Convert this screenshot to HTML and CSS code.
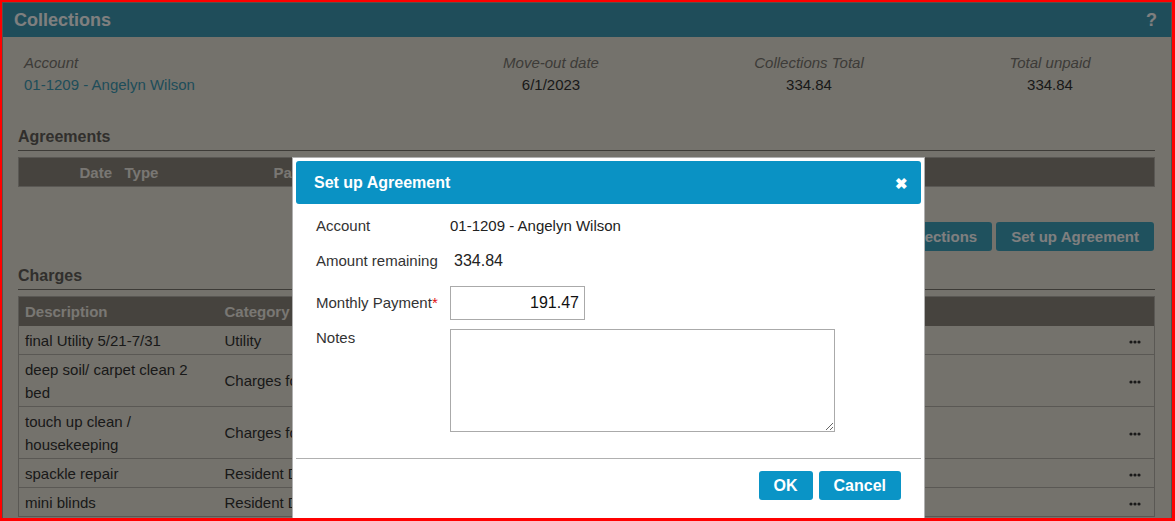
FILE: index.html
```html
<!DOCTYPE html>
<html>
<head>
<meta charset="utf-8">
<title>Collections</title>
<link rel="stylesheet" href="styles.css">
</head>
<body>
<div class="app">
  <div class="titlebar">
    <span class="title">Collections</span>
    <span class="help">?</span>
  </div>
  <div class="content">
    <div class="summary">
      <div class="cell first">
        <div class="lbl">Account</div>
        <a class="link">01-1209 - Angelyn Wilson</a>
      </div>
      <div class="cell">
        <div class="lbl">Move-out date</div>
        <div class="val">6/1/2023</div>
      </div>
      <div class="cell">
        <div class="lbl">Collections Total</div>
        <div class="val">334.84</div>
      </div>
      <div class="cell">
        <div class="lbl">Total unpaid</div>
        <div class="val">334.84</div>
      </div>
    </div>

    <h2 class="section">Agreements</h2>
    <table class="grid">
      <thead>
        <tr>
          <th class="a-sel"></th>
          <th class="a-date">Date</th>
          <th class="a-type">Type</th>
          <th class="a-pay">Payment</th>
          <th></th>
        </tr>
      </thead>
    </table>

    <div class="actions">
      <button class="btn">Remove from Collections</button>
      <button class="btn">Set up Agreement</button>
    </div>

    <h2 class="section">Charges</h2>
    <table class="grid charges">
      <thead>
        <tr>
          <th class="c-desc">Description</th>
          <th class="c-cat">Category</th>
          <th></th>
          <th class="c-more"></th>
        </tr>
      </thead>
      <tbody>
        <tr><td>final Utility 5/21-7/31</td><td>Utility</td><td></td><td class="c-more"><svg class="dots" viewBox="0 0 12 4" width="12" height="4"><circle cx="2" cy="2" r="1.6"/><circle cx="6" cy="2" r="1.6"/><circle cx="10" cy="2" r="1.6"/></svg></td></tr>
        <tr><td>deep soil/ carpet clean 2 bed</td><td>Charges for cleaning</td><td></td><td class="c-more"><svg class="dots" viewBox="0 0 12 4" width="12" height="4"><circle cx="2" cy="2" r="1.6"/><circle cx="6" cy="2" r="1.6"/><circle cx="10" cy="2" r="1.6"/></svg></td></tr>
        <tr><td>touch up clean / housekeeping</td><td>Charges for cleaning</td><td></td><td class="c-more"><svg class="dots" viewBox="0 0 12 4" width="12" height="4"><circle cx="2" cy="2" r="1.6"/><circle cx="6" cy="2" r="1.6"/><circle cx="10" cy="2" r="1.6"/></svg></td></tr>
        <tr><td>spackle repair</td><td>Resident Damages</td><td></td><td class="c-more"><svg class="dots" viewBox="0 0 12 4" width="12" height="4"><circle cx="2" cy="2" r="1.6"/><circle cx="6" cy="2" r="1.6"/><circle cx="10" cy="2" r="1.6"/></svg></td></tr>
        <tr><td>mini blinds</td><td>Resident Damages</td><td></td><td class="c-more"><svg class="dots" viewBox="0 0 12 4" width="12" height="4"><circle cx="2" cy="2" r="1.6"/><circle cx="6" cy="2" r="1.6"/><circle cx="10" cy="2" r="1.6"/></svg></td></tr>
      </tbody>
    </table>
  </div>
</div>

<div class="overlay"></div>

<div class="modal">
  <div class="modal-head">
    <span class="modal-title">Set up Agreement</span>
    <span class="modal-close">&#10006;</span>
  </div>
  <div class="modal-body">
    <div class="m-lbl r1">Account</div>
    <div class="m-val r1">01-1209 - Angelyn Wilson</div>
    <div class="m-lbl r2">Amount remaining</div>
    <div class="m-val r2 amount">334.84</div>
    <div class="m-lbl r3">Monthly Payment<span class="req">*</span></div>
    <div class="m-val r3"><input class="m-input" type="text" value="191.47"></div>
    <div class="m-lbl r4">Notes</div>
    <div class="m-val r4"><textarea class="m-notes"></textarea></div>
  </div>
  <div class="modal-foot">
    <button class="m-btn">OK</button>
    <button class="m-btn">Cancel</button>
  </div>
</div>

<div class="frame"></div>
</body>
</html>
```
FILE: styles.css
```css
* { box-sizing: border-box; }

html, body {
  margin: 0;
  padding: 0;
  height: 100%;
  overflow: hidden;
}

body {
  font-family: "Liberation Sans", Arial, sans-serif;
  font-size: 15px;
  color: #333;
  background: #e8e4d8;
}

.app {
  margin: 2px 3px 0 2px;
  height: calc(100% - 2px);
  border: 1px solid #a8a59c;
  border-bottom: none;
  background: #e8e4d8;
}

.titlebar {
  height: 34px;
  background: #3e9bb4;
  color: #fff;
  display: flex;
  align-items: center;
  justify-content: space-between;
  padding: 0 14px 0 11px;
  font-weight: bold;
  font-size: 18px;
}

.content {
  padding: 0 15px 0 15px;
  margin-right: 1px;
}

.summary {
  display: grid;
  grid-template-columns: 1fr 244px 272px 210px;
  padding: 15px 0 0 6px;
  line-height: 22px;
}

.cell { text-align: center; }
.cell.first { text-align: left; }

.lbl {
  font-style: italic;
  color: #7a7770;
}

.val { color: #333; }

.link {
  color: #3e9bb4;
  text-decoration: none;
}

.section {
  margin: 31px 0 6px 0;
  font-size: 16px;
  line-height: 20px;
  font-weight: bold;
  color: #625f5a;
  padding-bottom: 3px;
  border-bottom: 1px solid #7a766e;
}

.grid {
  width: 100%;
  table-layout: fixed;
  border-collapse: collapse;
  border: 1px solid #b4b0a8;
}

.grid th {
  background: #8c867c;
  color: #f2eee6;
  font-weight: bold;
  text-align: left;
  height: 29px;
  padding: 0 6px;
  white-space: nowrap;
  overflow: hidden;
}

.a-sel { width: 55px; }
.a-date { width: 45px; }
.a-type { width: 149px; }
.a-pay { width: 120px; }

.actions {
  display: flex;
  justify-content: flex-end;
  gap: 4px;
  padding: 35px 1px 0 0;
}

.btn {
  font-family: inherit;
  font-size: 15px;
  font-weight: bold;
  color: #fff;
  background: #3fa2bd;
  border: none;
  border-radius: 3px;
  height: 29px;
  padding: 0 15px;
}

.actions + .section { margin-top: 15px; }

.charges td {
  padding: 3px 6px 2px 6px;
  line-height: 23px;
  border-bottom: 1px solid #b4b0a8;
  vertical-align: middle;
}

.c-desc { width: 200px; }
.c-cat { width: 260px; }
.c-more { width: 40px; text-align: right; }
.charges td.c-more { padding-right: 13px; }

.dots { fill: #333; display: inline-block; vertical-align: middle; }

.overlay {
  position: fixed;
  inset: 0;
  background: rgba(0, 0, 0, 0.5);
}

.modal {
  position: fixed;
  left: 292px;
  top: 157px;
  width: 633px;
  height: 370px;
  background: #fff;
  border: 1px solid #b0b0b0;
  padding: 3px;
  color: #333;
}

.modal-head {
  height: 43px;
  background: #0a92c4;
  border-radius: 3px;
  display: flex;
  align-items: center;
  justify-content: space-between;
  padding: 1px 13px 0 18px;
  color: #fff;
  font-weight: bold;
  font-size: 16px;
}

.modal-close {
  font-size: 15px;
  line-height: 1;
}

.modal-body {
  display: grid;
  grid-template-columns: 134px 1fr;
  padding: 11px 0 0 20px;
  line-height: 22px;
  row-gap: 0;
}

.m-lbl { color: #333; }
.m-val { color: #222; }

.r1 { margin-bottom: 13px; }
.r2 { margin-bottom: 14px; }
.r3 { margin-bottom: 9px; }
.m-lbl.r3 { align-self: center; }
.m-lbl.r4 { margin-top: -2px; }

.amount {
  font-size: 16px;
  padding-left: 4px;
}

.req { color: #e01010; }

.m-input {
  width: 135px;
  height: 34px;
  border: 1px solid #aaa;
  font-family: inherit;
  font-size: 16px;
  color: #111;
  text-align: right;
  padding: 0 5px;
  display: block;
}

.m-notes {
  width: 385px;
  height: 103px;
  border: 1px solid #aaa;
  display: block;
  font-family: inherit;
  font-size: 15px;
  margin: 0;
}

.modal-foot {
  margin-top: 26px;
  border-top: 1px solid #b0b0b0;
  display: flex;
  justify-content: flex-end;
  gap: 6px;
  padding: 12px 20px 0 0;
}

.m-btn {
  font-family: inherit;
  font-size: 16px;
  font-weight: bold;
  color: #fff;
  background: #0a94c6;
  border: none;
  border-radius: 3px;
  height: 29px;
  padding: 0 15px;
}

.frame {
  position: fixed;
  inset: 0;
  border-style: solid;
  border-color: #ff0000;
  border-width: 2px 3px 3px 2px;
  pointer-events: none;
}
```
